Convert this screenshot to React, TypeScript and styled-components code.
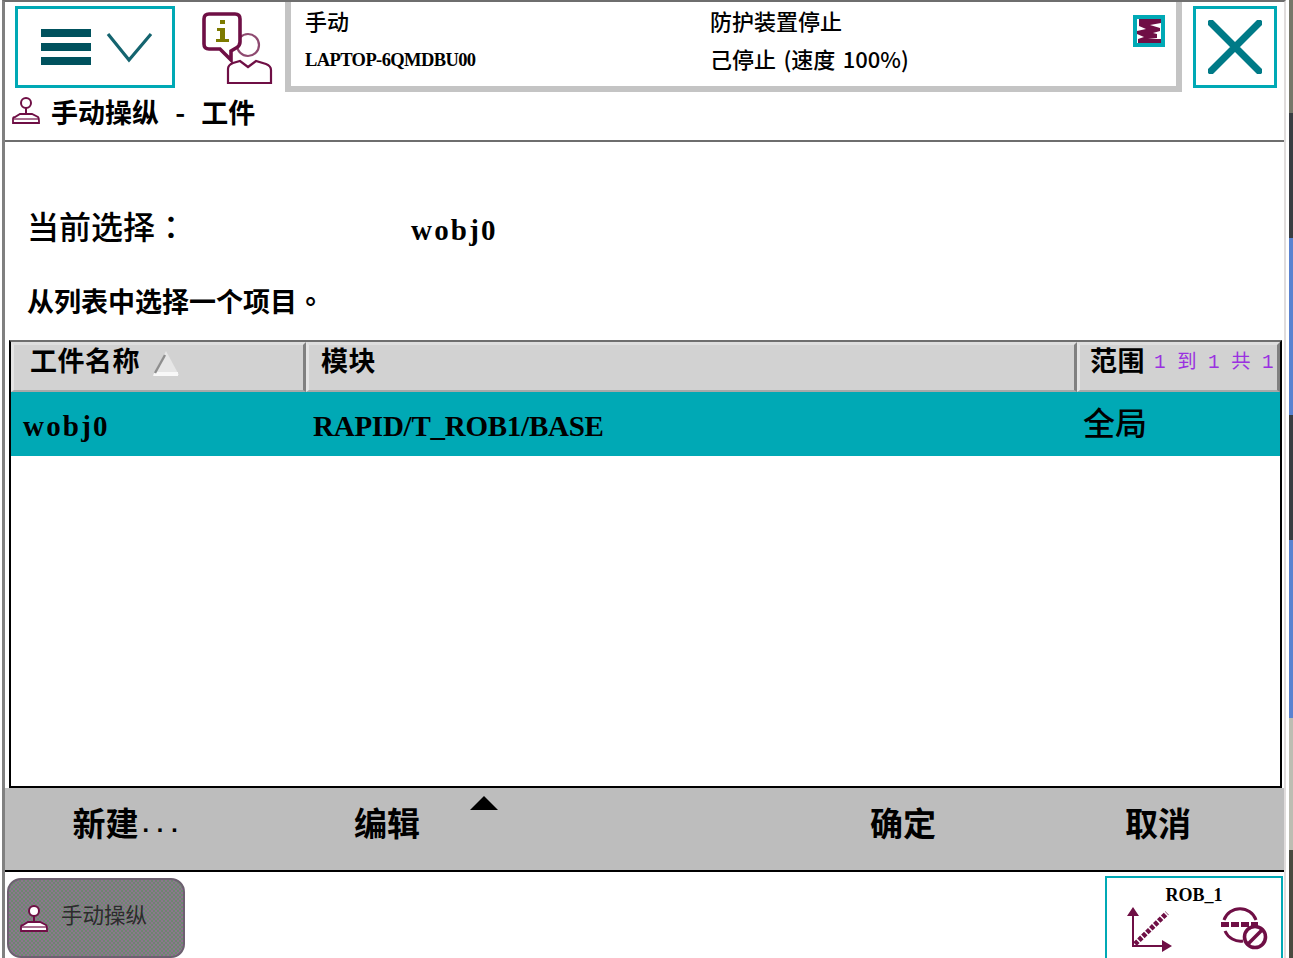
import { createGlobalStyle } from 'styled-components';
import styled from 'styled-components';

const cjk = `"Noto Sans CJK SC", "Liberation Sans", sans-serif`;
const latin = `"Liberation Serif", "Noto Sans CJK SC", serif`;
const mono = `"Liberation Mono", "Noto Sans CJK SC", monospace`;
const teal = '#00a9b5';
const plum = '#6f0f45';

const GlobalStyle = createGlobalStyle`
  html, body {
    margin: 0;
    padding: 0;
    background: #fff;
  }
  * {
    box-sizing: border-box;
  }
`;

function MenuIcon() {
  return (
    <svg width="112" height="40" viewBox="0 0 112 40">
      <g fill="#00525e">
        <rect x="0" y="0" width="50" height="8" />
        <rect x="0" y="14" width="50" height="8" />
        <rect x="0" y="28" width="50" height="8" />
      </g>
      <path d="M67 5 L88 31 L110 5" fill="none" stroke="#14646f" strokeWidth="3.2" />
    </svg>
  );
}

function InfoUserIcon() {
  return (
    <svg width="72" height="74" viewBox="0 0 72 74">
      <circle cx="46" cy="33" r="11" fill="#fff" stroke="#8e4a70" strokeWidth="2.2" />
      <path
        d="M26 71 V57 Q26 53 31 51 L38 49 L46 55 L54 49 L64 52 Q69 54 69 58 V71 Z"
        fill="#fff"
        stroke={plum}
        strokeWidth="2.2"
      />
      <path
        d="M7 2 H33 Q38 2 38 7 V30 Q38 34 34 36 L29 39 V48 L18 37 H7 Q2 37 2 32 V7 Q2 2 7 2 Z"
        fill="#fff"
        stroke={plum}
        strokeWidth="3.6"
      />
      <rect x="18" y="8" width="5" height="4" fill="#7d7a00" />
      <path d="M15 16 H23 V27 H27 V30 H14 V27 H18 V19 H15 Z" fill="#7d7a00" />
    </svg>
  );
}

function JoystickIcon() {
  return (
    <svg width="30" height="28" viewBox="0 0 30 28">
      <circle cx="15" cy="7" r="5" fill="#fff" stroke={plum} strokeWidth="2" />
      <path d="M15 12 V19" stroke={plum} strokeWidth="2" />
      <path d="M9 18 H21 L27 21 Q28 22 28 25 V27 H2 V23 Q2 21 4 21 Z" fill="#fff" stroke={plum} strokeWidth="1.8" />
      <path d="M3 23 H27" stroke={plum} strokeWidth="1.2" />
    </svg>
  );
}

function CloseIcon() {
  return (
    <svg width="54" height="54" viewBox="0 0 54 54">
      <path d="M3 3 L51 51 M51 3 L3 51" stroke="#007a87" strokeWidth="7" strokeLinecap="round" />
    </svg>
  );
}

function SpeedIcon() {
  return (
    <svg width="24" height="24" viewBox="0 0 24 24">
      <path
        d="M2 0 H24 V4 L13 6 L23 9 V12 L16 14 L20 15 V19 L11 20 L24 20 V24 H1 V20 L7 18 L0 15 V12 L9 10 L2 7 Z"
        fill={plum}
      />
    </svg>
  );
}

function SortIcon() {
  return (
    <SortMark width="28" height="26" viewBox="0 0 28 26">
      <path d="M14 1 L27 25 H1 Z" fill="#e6e6e6" />
      <path d="M3 22 H26 V26 H1 Z" fill="#f8f8f8" />
      <path d="M3 23 L13 5" stroke="#8e8e8e" strokeWidth="2.4" />
    </SortMark>
  );
}

function AxesIcon() {
  return (
    <svg width="48" height="48" viewBox="0 0 48 48">
      <path d="M7 9 V40 H38" fill="none" stroke={plum} strokeWidth="2" />
      <path d="M1 10 L7 1 L13 10 Z M36 34 L46 40 L36 46 Z" fill={plum} />
      <path d="M9 38 L41 7" stroke={plum} strokeWidth="5" strokeDasharray="4 1.5" />
    </svg>
  );
}

function RunStateIcon() {
  return (
    <svg width="48" height="44" viewBox="0 0 48 44">
      <path d="M4 14 A17 17 0 0 1 36 14" fill="none" stroke={plum} strokeWidth="3" />
      <path d="M5 25 A17 17 0 0 0 23 35" fill="none" stroke={plum} strokeWidth="3" />
      <path d="M1 18.5 H38" stroke={plum} strokeWidth="5" strokeDasharray="8 2" />
      <circle cx="35" cy="31" r="10.5" fill="#fff" stroke={plum} strokeWidth="3.6" />
      <path d="M28 38 L42 24" stroke={plum} strokeWidth="3.6" />
    </svg>
  );
}

export default function App() {
  return (
    <>
      <GlobalStyle />
      <Screen>
        <Frame>
          <Header>
            <MenuButton>
              <MenuIcon />
            </MenuButton>
            <InfoSlot>
              <InfoUserIcon />
            </InfoSlot>
            <StatusPanel>
              <StatusCell>手动</StatusCell>
              <StatusCell>防护装置停止</StatusCell>
              <StatusCell $latin>LAPTOP-6QMDBU00</StatusCell>
              <StatusCell>己停止 (速度 100%)</StatusCell>
              <SpeedBadge>
                <SpeedIcon />
              </SpeedBadge>
            </StatusPanel>
            <CloseButton>
              <CloseIcon />
            </CloseButton>
          </Header>

          <TitleBar>
            <JoystickIcon />
            <TitleText>手动操纵 - 工件</TitleText>
          </TitleBar>

          <Selection>
            <SelectionLabel>
              当前选择<Punct>：</Punct>
            </SelectionLabel>
            <SelectionValue>wobj0</SelectionValue>
          </Selection>
          <Hint>
            从列表中选择一个项目<Punct>。</Punct>
          </Hint>

          <TableBox>
            <HeadRow>
              <HeadCell $pad={16}>
                工件名称
                <SortIcon />
              </HeadCell>
              <HeadCell $pad={12}>模块</HeadCell>
              <HeadCell $pad={10}>
                范围
                <RowCount>1 到 1 共 1</RowCount>
              </HeadCell>
            </HeadRow>
            <DataRow>
              <DataCell $spacing={2.2}>wobj0</DataCell>
              <DataCell $spacing={-0.25}>RAPID/T_ROB1/BASE</DataCell>
              <ScopeCell>全局</ScopeCell>
            </DataRow>
          </TableBox>

          <Toolbar>
            <ToolButton>
              新建<Dots>...</Dots>
            </ToolButton>
            <ToolButton>
              编辑
              <MenuArrow />
            </ToolButton>
            <ToolButton />
            <ToolButton>确定</ToolButton>
            <ToolButton>取消</ToolButton>
          </Toolbar>

          <TaskBar>
            <TaskButton>
              <JoystickIcon />
              <TaskLabel>手动操纵</TaskLabel>
            </TaskButton>
            <RobotBox>
              <RobotName>ROB_1</RobotName>
              <RobotIcons>
                <AxesIcon />
                <RunStateIcon />
              </RobotIcons>
            </RobotBox>
          </TaskBar>
        </Frame>
        <DesktopSliver />
      </Screen>
    </>
  );
}

const Screen = styled.div`
  width: 1293px;
  height: 958px;
  overflow: hidden;
  background: #fff;
  padding-left: 2px;
  display: flex;
`;

const Frame = styled.div`
  width: 1284px;
  height: 958px;
  flex: none;
  border-left: 3px solid #808080;
  border-right: 2px solid #e0dcdc;
  border-top: 2px solid #6e6e6e;
  display: flex;
  flex-direction: column;
  font-family: ${cjk};
  color: #000;

  & > * {
    flex-shrink: 0;
  }
`;

const DesktopSliver = styled.div`
  width: 4px;
  height: 958px;
  margin-left: 3px;
  flex: none;
  background: linear-gradient(
    to bottom,
    #77776a 0 113px,
    #3a3d42 113px 238px,
    #5a82d0 238px 415px,
    #3a3d42 415px 540px,
    #5a82d0 540px 718px,
    #bdbdb2 718px 850px,
    #4a4a40 850px 100%
  );
`;

const Header = styled.div`
  height: 90px;
  display: flex;
  align-items: flex-start;
`;

const MenuButton = styled.div`
  width: 160px;
  height: 82px;
  margin: 4px 0 0 10px;
  border: 3px solid ${teal};
  display: flex;
  align-items: center;
  padding: 3px 0 0 23px;
`;

const InfoSlot = styled.div`
  width: 110px;
  padding: 10px 0 0 27px;
`;

const StatusPanel = styled.div`
  position: relative;
  width: 897px;
  height: 90px;
  border: 6px solid #c4c4c4;
  border-top: 0;
  display: grid;
  grid-template-columns: 405px 1fr;
  grid-auto-rows: 38px;
  padding: 2px 0 0 14px;
`;

const StatusCell = styled.div<{ $latin?: boolean }>`
  font-family: ${p => (p.$latin ? latin : cjk)};
  font-size: ${p => (p.$latin ? '18.5px' : '22px')};
  font-weight: ${p => (p.$latin ? 700 : 500)};
  letter-spacing: ${p => (p.$latin ? '-0.6px' : '0')};
  word-spacing: 2.5px;
  line-height: 38px;
  margin-top: ${p => (p.$latin ? '-1px' : '-3px')};
  white-space: pre;
`;

const SpeedBadge = styled.div`
  position: absolute;
  top: 13px;
  right: 11px;
  width: 32px;
  height: 32px;
  border: 4px solid ${teal};
  display: flex;
  align-items: center;
  justify-content: center;
`;

const CloseButton = styled.div`
  width: 84px;
  height: 82px;
  margin: 4px 0 0 11px;
  border: 3px solid ${teal};
  display: flex;
  align-items: center;
  justify-content: center;
`;

const TitleBar = styled.div`
  height: 50px;
  border-bottom: 2px solid #6e6e6e;
  display: flex;
  align-items: flex-start;
  gap: 10px;
  padding: 4px 0 0 6px;
`;

const TitleText = styled.div`
  font-size: 27px;
  font-weight: 700;
  line-height: 34px;
  margin-top: -1px;
  white-space: pre;
  word-spacing: 10px;
`;

const Selection = styled.div`
  height: 40px;
  margin-top: 63px;
  display: flex;
  align-items: flex-start;
  padding-left: 22px;
`;

const SelectionLabel = styled.div`
  width: 384px;
  font-size: 32px;
  font-weight: 500;
  line-height: 40px;
`;

const Punct = styled.span`
  font-family: "Noto Sans CJK TC", sans-serif;
`;

const SelectionValue = styled.div`
  font-family: ${latin};
  font-size: 29px;
  font-weight: 700;
  letter-spacing: 2.2px;
  line-height: 40px;
  margin-top: 5px;
`;

const Hint = styled.div`
  height: 28px;
  margin: 42px 0 25px;
  padding-left: 22px;
  font-size: 27px;
  font-weight: 700;
  line-height: 28px;
`;

const TableBox = styled.div`
  height: 448px;
  margin-left: 4px;
  width: 1273px;
  border-top: 2px solid #6e6e6e;
  border-bottom: 2px solid #000;
  border-left: 2px solid #000;
  border-right: 2px solid #000;
`;

const HeadRow = styled.div`
  height: 50px;
  display: grid;
  grid-template-columns: 295px 771px 1fr;
`;

const HeadCell = styled.div<{ $pad: number }>`
  background: #d2d2d2;
  border-top: 3px solid #dedede;
  border-bottom: 2px solid #a8a8a8;
  border-left: 3px solid #e4e4e4;
  border-right: 3px solid #808080;
  padding-left: ${p => p.$pad}px;
  display: flex;
  align-items: flex-start;
  white-space: nowrap;
  font-size: 27px;
  font-weight: 700;
  letter-spacing: 0.5px;
  line-height: 30px;
`;

const SortMark = styled.svg`
  flex: none;
  margin: 5px 0 0 12px;
`;

const RowCount = styled.span`
  margin-left: 9px;
  color: #9a30e0;
  font-family: ${mono};
  font-size: 19.3px;
  font-weight: 400;
  letter-spacing: 0;
  line-height: 36px;
  white-space: pre;
`;

const DataRow = styled.div`
  height: 64px;
  background: ${teal};
  display: grid;
  grid-template-columns: 290px 770px 1fr;
  align-items: center;
`;

const DataCell = styled.div<{ $spacing: number }>`
  padding-left: 12px;
  font-family: ${latin};
  font-size: 29px;
  font-weight: 700;
  letter-spacing: ${p => p.$spacing}px;
  line-height: 40px;
  margin-top: 3px;
`;

const ScopeCell = styled.div`
  padding-left: 12px;
  font-size: 32px;
  font-weight: 500;
  line-height: 40px;
  margin-top: -6px;
`;

const Toolbar = styled.div`
  height: 84px;
  background: #bdbdbd;
  border-bottom: 2px solid #000;
  display: grid;
  grid-template-columns: 244px 276px 249px 258px 1fr;
`;

const ToolButton = styled.div`
  position: relative;
  display: flex;
  align-items: center;
  justify-content: center;
  font-size: 33px;
  font-weight: 700;
  padding-bottom: 14px;
`;

const Dots = styled.span`
  font-family: ${mono};
  font-size: 24px;
  font-weight: 700;
  margin-top: 6px;
`;

const MenuArrow = styled.span`
  position: absolute;
  top: 8px;
  left: 221px;
  width: 0;
  height: 0;
  border-left: 14px solid transparent;
  border-right: 14px solid transparent;
  border-bottom: 14px solid #000;
`;

const TaskBar = styled.div`
  height: 86px;
  display: flex;
  justify-content: space-between;
  align-items: flex-start;
  padding: 6px 1px 0 2px;
`;

const TaskButton = styled.div`
  width: 178px;
  height: 80px;
  border: 2px solid #6d6070;
  border-radius: 14px;
  background-color: #808080;
  background-image: repeating-conic-gradient(#6a8a6e 0 25%, #8f7290 0 50%);
  background-size: 4px 4px;
  display: flex;
  align-items: center;
  gap: 12px;
  padding-left: 10px;
`;

const TaskLabel = styled.span`
  font-size: 21.5px;
  color: #2c2c2c;
  margin-bottom: 10px;
`;

const RobotBox = styled.div`
  width: 178px;
  height: 90px;
  margin-top: -2px;
  border: 2px solid ${teal};
  border-bottom: 0;
`;

const RobotName = styled.div`
  font-family: ${latin};
  font-size: 18px;
  font-weight: 700;
  line-height: 22px;
  margin-top: 6px;
  text-align: center;
`;

const RobotIcons = styled.div`
  display: flex;
  justify-content: space-between;
  padding: 0 13px 0 19px;
`;
